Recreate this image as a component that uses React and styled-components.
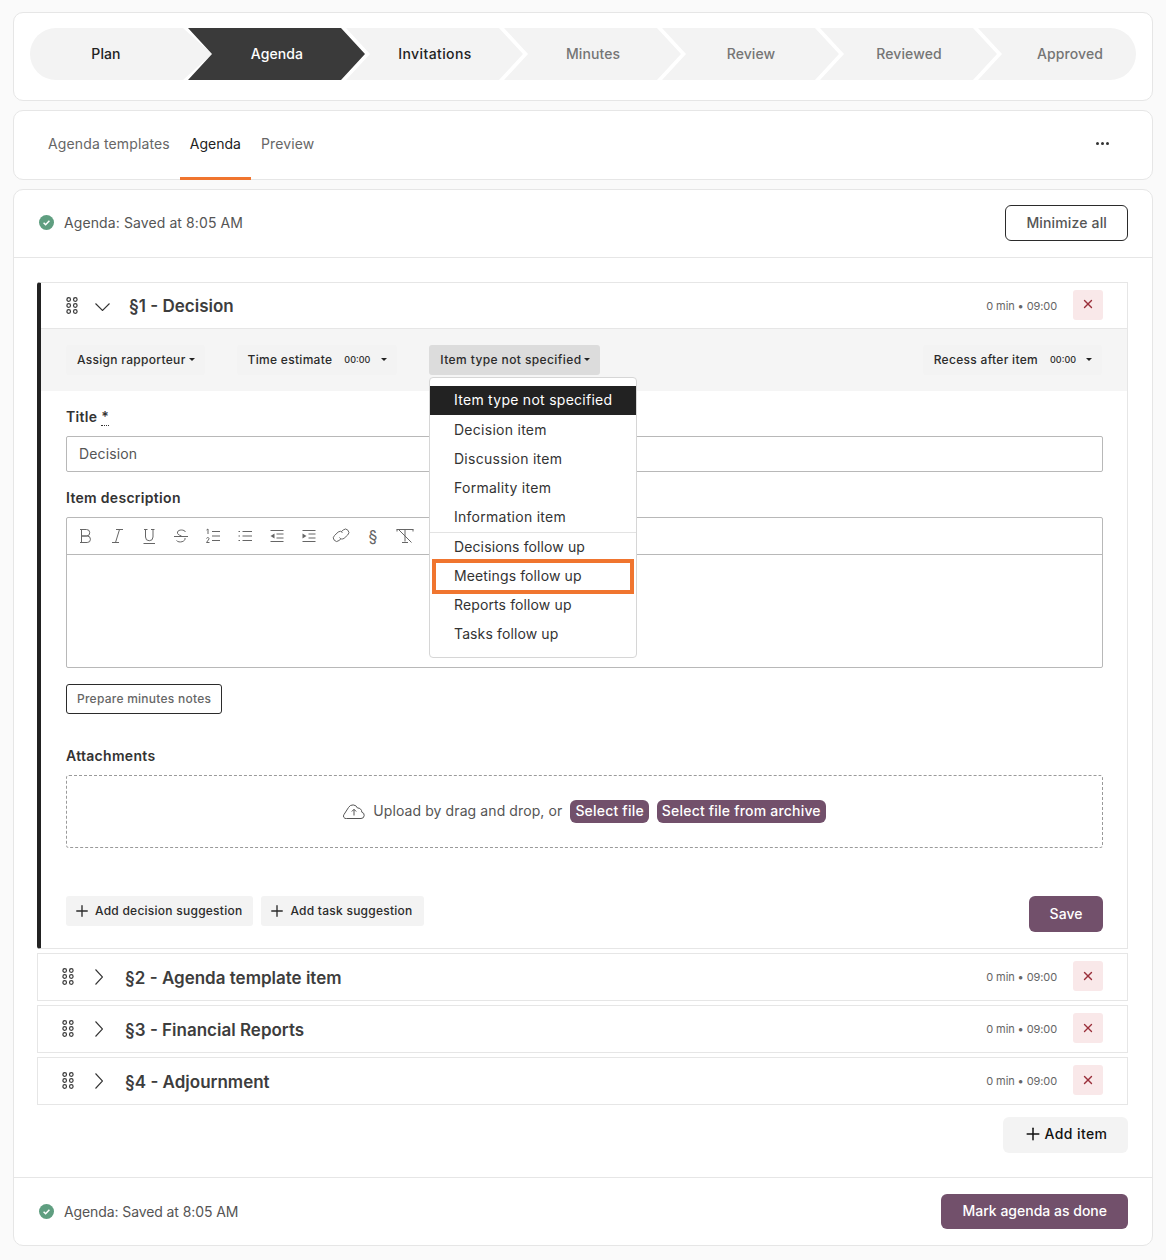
import styled, { createGlobalStyle } from 'styled-components';
import { Plus, X } from 'lucide-react';

const GlobalStyle = createGlobalStyle`
  html, body {
    margin: 0;
    padding: 0;
    background: #fafafa;
    font-family: 'Inter', 'Liberation Sans', sans-serif;
    color: #333;
  }
  * {
    box-sizing: border-box;
  }
`;

const Page = styled.div`
  display: flex;
  flex-direction: column;
  gap: 9px;
  padding: 12px 13px 0 13px;
  width: 1166px;
  height: 1260px;
`;

const Card = styled.section`
  background: #fff;
  border: 1px solid #e6e6e6;
  border-radius: 10px;
`;

const StepCard = styled(Card)`
  height: 89px;
  padding: 15px 16px;
`;

const Stepper = styled.div`
  display: flex;
  height: 52px;
`;

const Step = styled.div`
  flex: none;
  width: ${p => (p.$last ? '158px' : '182px')};
  margin-right: ${p => (p.$last ? '0' : '-24px')};
  padding: ${p => (p.$first ? '0 30px 2px 0' : p.$last ? '0 0 2px 26px' : '0 4px 2px 0')};
  display: flex;
  align-items: center;
  justify-content: center;
  font-size: 14px;
  font-weight: 500;
  letter-spacing: ${p => (p.$done && !p.$first && !p.$active ? '.4px' : '.1px')};
  background: ${p => (p.$active ? '#3a3a3a' : '#f3f3f3')};
  color: ${p => (p.$active ? '#fff' : p.$done ? '#222' : '#757575')};
  border-radius: ${p => (p.$first ? '26px 0 0 26px' : p.$last ? '0 26px 26px 0' : '0')};
  clip-path: ${p =>
    p.$first
      ? 'polygon(0 0, 153px 0, 182px 50%, 153px 100%, 0 100%)'
      : p.$last
        ? 'polygon(0 0, 100% 0, 100% 100%, 0 100%, 24px 50%)'
        : 'polygon(0 0, 153px 0, 177px 50%, 153px 100%, 0 100%, 24px 50%)'};
`;

const TabCard = styled(Card)`
  height: 70px;
  display: flex;
  align-items: stretch;
  justify-content: space-between;
  padding: 0 43px 0 24px;
`;

const Tabs = styled.nav`
  display: flex;
`;

const Tab = styled.div`
  display: flex;
  align-items: center;
  padding: 0 10px 2px;
  margin-bottom: -1px;
  font-size: 14px;
  letter-spacing: ${p => (p.$active ? '0' : '.13px')};
  color: ${p => (p.$active ? '#222' : '#666')};
  border-bottom: 3px solid ${p => (p.$active ? '#f0752f' : 'transparent')};
`;

const MoreDots = styled.div`
  display: flex;
  align-items: center;
  gap: 2px;
  margin-bottom: 3px;
  span {
    width: 3px;
    height: 3px;
    border-radius: 50%;
    background: #333;
  }
`;

const MainCard = styled(Card)`
  height: 1057px;
  display: flex;
  flex-direction: column;
`;

const StatusBar = styled.header`
  height: 68px;
  display: flex;
  align-items: center;
  justify-content: space-between;
  padding: 0 24px 1px 25px;
  border-bottom: 1px solid #e6e6e6;
`;

const FooterBar = styled(StatusBar)`
  border-bottom: none;
  border-top: 1px solid #e6e6e6;
  padding-bottom: 0;
`;

const Status = styled.div`
  display: flex;
  align-items: center;
  gap: 10px;
  padding-bottom: ${p => (p.$tight ? '0' : '2px')};
  font-size: 14px;
  letter-spacing: ${p => (p.$tight ? '-.1px' : '.1px')};
  color: #555;
`;

const OutlineButton = styled.button`
  font-family: inherit;
  font-size: 14px;
  font-weight: 500;
  letter-spacing: .15px;
  color: #555;
  background: #fff;
  border: 1px solid #2b2b2b;
  border-radius: 6px;
  height: 36px;
  padding: 0 20px 2px;
`;

const PrimaryButton = styled.button`
  font-family: inherit;
  font-size: 14px;
  font-weight: 500;
  color: #fff;
  background: #72506b;
  border: none;
  border-radius: 6px;
  height: 36px;
  padding: 0 21px 2px;
`;

const MarkDoneButton = styled(PrimaryButton)`
  height: 35px;
`;

const Body = styled.div`
  flex: 1;
  display: flex;
  flex-direction: column;
  padding: 24px 24px 0 23px;
`;

const Item = styled.article`
  border: 1px solid #e6e6e6;
  margin-bottom: 4px;
`;

const OpenItem = styled(Item)`
  height: 667px;
  border-left: 4px solid #222;
  border-radius: 3px 0 0 3px;
  position: relative;
`;

const ItemHead = styled.div`
  height: 46px;
  display: flex;
  align-items: center;
  padding: 0 24px 0 ${p => (p.$open ? '25px' : '24px')};
  border-bottom: ${p => (p.$open ? '1px solid #e6e6e6' : 'none')};
`;

const Grip = styled.svg`
  flex: none;
  width: 12px;
  height: 17px;
  margin-top: -1px;
  margin-right: 13px;
  color: #3a3a3a;
`;

const Caret = styled.span`
  flex: none;
  display: flex;
  justify-content: center;
  width: 22px;
  margin-right: 16px;
  padding-left: ${p => (p.$open ? '0' : '2px')};
  margin-top: ${p => (p.$open ? '2px' : '-1px')};
  color: #333;
`;

const ItemTitle = styled.h3`
  margin: 0;
  flex: 1;
  padding-top: 1px;
  font-size: 17px;
  font-weight: 600;
  color: #3d3d3d;
`;

const Meta = styled.span`
  font-size: 11px;
  letter-spacing: -.1px;
  color: #666;
  margin-right: 16px;
`;

const DeleteButton = styled.button`
  width: 30px;
  height: 30px;
  margin-top: -2px;
  padding: 0 0 1px;
  display: flex;
  align-items: center;
  justify-content: center;
  border: none;
  border-radius: 3px;
  background: #f9e8e9;
  color: #9a2f3a;
`;

const Toolbar = styled.div`
  height: 62px;
  background: #f5f5f5;
  display: flex;
  align-items: center;
  gap: 32px;
  padding: 0 25px;
`;

const ToolButton = styled.div`
  height: 30px;
  display: flex;
  align-items: center;
  padding: 0 10px 1px 11px;
  border-radius: 3px;
  font-size: 12px;
  font-weight: 500;
  letter-spacing: ${p => (p.$open ? '.4px' : '.3px')};
  color: #2b2b2b;
  background: ${p => (p.$open ? '#dcdcdc' : '#f3f3f3')};
  margin-left: ${p => (p.$right ? 'auto' : '0')};
`;

const Time = styled.span`
  font-size: 9px;
  letter-spacing: 0;
  margin-left: 12px;
`;

const CaretDown = styled.i`
  width: 0;
  height: 0;
  margin-left: ${p => p.$gap || 3}px;
  border-left: 3px solid transparent;
  border-right: 3px solid transparent;
  border-top: 3px solid #222;
`;

const Form = styled.div`
  padding: 0 24px 0 25px;
`;

const Label = styled.div`
  font-size: 14px;
  font-weight: 600;
  letter-spacing: .3px;
  color: #333;
  line-height: 18px;
`;

const Required = styled.span`
  border-bottom: 1px dotted #333;
`;

const TitleLabel = styled(Label)`
  padding-top: 17px;
`;

const TitleInput = styled.div`
  height: 36px;
  margin-top: 10px;
  padding: 0 12px 1px;
  display: flex;
  align-items: center;
  border: 1px solid #b8b8b8;
  border-radius: 2px;
  font-size: 14px;
  letter-spacing: .13px;
  color: #555;
`;

const DescLabel = styled(Label)`
  margin-top: 17px;
`;

const Editor = styled.div`
  margin-top: 10px;
  height: 151px;
  border: 1px solid #b8b8b8;
  border-radius: 2px;
`;

const EditorBar = styled.div`
  height: 37px;
  display: flex;
  align-items: center;
  gap: 12px;
  padding: 0 8px;
  border-bottom: 1px solid #b8b8b8;
  color: #666;
  svg {
    width: 20px;
    height: 20px;
    flex: none;
  }
`;

const SectionMark = styled.span`
  flex: none;
  width: 20px;
  text-align: center;
  font-size: 16px;
  line-height: 20px;
`;

const NotesButton = styled(OutlineButton)`
  display: block;
  height: 30px;
  margin-top: 16px;
  padding: 0 10px 1px;
  border-radius: 3px;
  font-size: 12px;
  letter-spacing: .25px;
  color: #666;
`;

const AttachLabel = styled(Label)`
  margin-top: 33px;
`;

const DropZone = styled.div`
  margin-top: 10px;
  height: 73px;
  display: flex;
  align-items: center;
  justify-content: center;
  padding-bottom: 1px;
  border: 1px dashed #9a9a9a;
  border-radius: 3px;
  font-size: 14px;
  letter-spacing: .1px;
  color: #555;
`;

const UploadText = styled.span`
  padding-bottom: 2px;
`;

const CloudIcon = styled.svg`
  width: 22px;
  height: 16px;
  margin: 0 8px 1px 0;
  color: #555;
`;

const Pill = styled.span`
  height: 23px;
  display: inline-flex;
  align-items: center;
  padding: 0 5px 1px;
  margin-left: 8px;
  border-radius: 6px;
  background: #72506b;
  color: #fff;
  font-weight: 500;
  letter-spacing: .2px;
`;

const ActionRow = styled.div`
  display: flex;
  align-items: flex-start;
  gap: 8px;
  margin-top: 48px;
`;

const GhostButton = styled.div`
  height: 30px;
  display: flex;
  align-items: center;
  gap: 4px;
  padding: 0 11px 1px 7px;
  border-radius: 3px;
  background: #f3f3f3;
  font-size: 12px;
  font-weight: 500;
  letter-spacing: .25px;
  color: #2b2b2b;
`;

const SaveButton = styled(PrimaryButton)`
  margin-left: auto;
  width: 74px;
  padding: 0 0 1px;
`;

const AddRow = styled.div`
  display: flex;
  justify-content: flex-end;
  margin-top: 8px;
`;

const AddItemButton = styled.div`
  height: 36px;
  width: 125px;
  display: flex;
  align-items: center;
  justify-content: center;
  gap: 2px;
  padding: 0 1px 3px 0;
  border-radius: 6px;
  background: #f3f3f3;
  font-size: 14px;
  font-weight: 500;
  letter-spacing: .4px;
  color: #111;
`;

const Menu = styled.div`
  position: absolute;
  left: 388px;
  top: 94px;
  width: 208px;
  height: 281px;
  padding-top: 8px;
  background: #fff;
  border: 1px solid #d6d6d6;
  border-radius: 4px;
  z-index: 2;
`;

const MenuItem = styled.div`
  height: 29px;
  padding: 0 0 ${p => (p.$lift ? '2px' : '1px')} 24px;
  display: flex;
  align-items: center;
  font-size: 14px;
  letter-spacing: ${p => (p.$lift && !p.$active ? '.12px' : '.27px')};
  color: ${p => (p.$active ? '#fff' : '#333')};
  background: ${p => (p.$active ? '#222' : 'transparent')};
`;

const MenuDivider = styled.div`
  margin: 1px 0 0;
  border-top: 1px solid #e3e3e3;
`;

const MenuHighlight = styled.div`
  position: absolute;
  left: 2px;
  top: 181px;
  width: 202px;
  height: 35px;
  border: 4px solid #f0752f;
`;

const steps = ['Plan', 'Agenda', 'Invitations', 'Minutes', 'Review', 'Reviewed', 'Approved'];

const closedItems = ['§2 - Agenda template item', '§3 - Financial Reports', '§4 - Adjournment'];

const menuTop = ['Decision item', 'Discussion item', 'Formality item', 'Information item'];
const menuBottom = ['Decisions follow up', 'Meetings follow up', 'Reports follow up', 'Tasks follow up'];

const GripIcon = () => (
  <Grip viewBox="0 0 12 17" fill="none" stroke="currentColor" strokeWidth="1.2">
    {[2.5, 8.5, 14.5].map(y => (
      <g key={y}>
        <circle cx="2.7" cy={y} r="1.8" />
        <circle cx="9.3" cy={y} r="1.8" />
      </g>
    ))}
  </Grip>
);

const SavedIcon = () => (
  <svg width="15" height="15" viewBox="0 0 15 15">
    <circle cx="7.5" cy="7.5" r="7.5" fill="#5f9e80" />
    <path d="M4.6 7.7l2 2 3.8-4" fill="none" stroke="#fff" strokeWidth="1.5" />
  </svg>
);

const ChevronOpen = () => (
  <svg width="15" height="8" viewBox="0 0 15 8" fill="none" stroke="currentColor" strokeWidth="1.1">
    <path d="M.5.5l7 7 7-7" />
  </svg>
);

const ChevronClosed = () => (
  <svg width="8" height="16" viewBox="0 0 8 16" fill="none" stroke="currentColor" strokeWidth="1.1">
    <path d="M.5.5l7 7.500-7 7.500" />
  </svg>
);

const DeleteItem = () => (
  <DeleteButton><X size={14} strokeWidth={2.3} /></DeleteButton>
);

// thin editor glyphs, drawn to follow the toolbar in the reference
const editorIcons = [
  <path key="b" d="M5 3.500h6.500a3.200 3.200 0 0 1 0 6.500H6.500m0 0h5.700a3.200 3.200 0 0 1 0 6.500H5M6.500 3.500v13" />,
  <path key="i" d="M9 3.500h7M5 16.500h7M12.500 3.500L8.500 16.500" />,
  <path key="u" d="M5 3.500h3.500M12 3.500h3.500M6.500 4v7a3.700 3.700 0 0 0 7.500 0V4M4.500 17.500h11.500" />,
  <path key="s" d="M14.500 6C13.500 3.500 7.500 3.200 6.500 6c-.5 1.800 1 3 4 4M3 10.500h14M14 12c1 3.500-6 5.500-8.500 2.500" />,
  <g key="ol">
    <path d="M9 5.500h8M9 10h8M9 14.500h8" strokeWidth="1.2" />
    <path d="M3.500 4l1.500-1v5M3.500 12.500c.5-1.500 3-1 2.500.5L3.500 16.500h3" strokeWidth="1" />
  </g>,
  <path key="ul" d="M7.500 5.500h9.500M7.500 10h9.500M7.500 14.500h9.500M3.500 5.500h1.500M3.500 10h1.500M3.500 14.500h1.500" strokeWidth="1.2" />,
  <g key="out">
    <path d="M3.500 4.500h13M9.500 8h7M9.500 12h7M3.500 15.500h13" strokeWidth="1.2" />
    <path d="M7.500 7.500v5L3.500 10z" fill="currentColor" stroke="none" />
  </g>,
  <g key="in">
    <path d="M3.500 4.500h13M9.500 8h7M9.500 12h7M3.500 15.500h13" strokeWidth="1.2" />
    <path d="M3.500 7.500v5L7.500 10z" fill="currentColor" stroke="none" />
  </g>,
  <path key="l" d="M11.500 6.500a3.200 3.200 0 0 0-4.300-.5L3.500 9.500a3.300 3.300 0 0 0 4.500 5l2-1.800M8.500 11.500c1 1.700 3 2 4.600.8L16.700 9a3.300 3.300 0 0 0-4.500-5l-2 1.800" />,
  null,
  <path key="x" d="M1.500 3.500h17M2 3.500v2M18 3.500v2M10 3.500v12M7 16.500h6M3.500 3.500l13 13" />,
];

const App = () => (
  <>
    <GlobalStyle />
    <Page>
      <StepCard>
        <Stepper>
          {steps.map((s, i) => (
            <Step key={s} $first={i === 0} $last={i === steps.length - 1} $active={i === 1} $done={i < 3}>
              {s}
            </Step>
          ))}
        </Stepper>
      </StepCard>

      <TabCard>
        <Tabs>
          <Tab>Agenda templates</Tab>
          <Tab $active>Agenda</Tab>
          <Tab>Preview</Tab>
        </Tabs>
        <MoreDots>
          <span />
          <span />
          <span />
        </MoreDots>
      </TabCard>

      <MainCard>
        <StatusBar>
          <Status>
            <SavedIcon />
            Agenda: Saved at 8:05 AM
          </Status>
          <OutlineButton>Minimize all</OutlineButton>
        </StatusBar>

        <Body>
          <OpenItem>
            <ItemHead $open>
              <GripIcon />
              <Caret $open><ChevronOpen /></Caret>
              <ItemTitle>§1 - Decision</ItemTitle>
              <Meta>0 min • 09:00</Meta>
              <DeleteItem />
            </ItemHead>
            <Toolbar>
              <ToolButton>Assign rapporteur<CaretDown /></ToolButton>
              <ToolButton>Time estimate<Time>00:00</Time><CaretDown $gap={11} /></ToolButton>
              <ToolButton $open>Item type not specified<CaretDown /></ToolButton>
              <ToolButton $right>Recess after item<Time>00:00</Time><CaretDown $gap={10} /></ToolButton>
            </Toolbar>
            <Form>
              <TitleLabel>Title <Required>*</Required></TitleLabel>
              <TitleInput>Decision</TitleInput>
              <DescLabel>Item description</DescLabel>
              <Editor>
                <EditorBar>
                  {editorIcons.map((icon, i) =>
                    icon ? (
                      <svg key={i} viewBox="0 0 20 20" fill="none" stroke="currentColor" strokeWidth="1">
                        {icon}
                      </svg>
                    ) : (
                      <SectionMark key={i}>§</SectionMark>
                    )
                  )}
                </EditorBar>
              </Editor>
              <NotesButton>Prepare minutes notes</NotesButton>
              <AttachLabel>Attachments</AttachLabel>
              <DropZone>
                <CloudIcon viewBox="0 0 22 16" fill="none" stroke="currentColor" strokeWidth="1">
                  <path d="M3.500 15.500H18a3.200 3.200 0 0 0 .8-6.300A4 4 0 0 0 14.500 5a5 5 0 0 0-9-.5L1 11.500a2.500 2.500 0 0 0 2.500 4z" />
                  <path d="M11 12.500V6.500M8.800 8.500L11 6.300l2.200 2.200" />
                </CloudIcon>
                <UploadText>Upload by drag and drop, or</UploadText>
                <Pill>Select file</Pill>
                <Pill>Select file from archive</Pill>
              </DropZone>
              <ActionRow>
                <GhostButton><Plus size={18} strokeWidth={1.8} />Add decision suggestion</GhostButton>
                <GhostButton><Plus size={18} strokeWidth={1.8} />Add task suggestion</GhostButton>
                <SaveButton>Save</SaveButton>
              </ActionRow>
            </Form>
            <Menu>
              <MenuItem $active $lift>Item type not specified</MenuItem>
              {menuTop.map(m => <MenuItem key={m}>{m}</MenuItem>)}
              <MenuDivider />
              {menuBottom.map(m => <MenuItem key={m} $lift>{m}</MenuItem>)}
              <MenuHighlight />
            </Menu>
          </OpenItem>

          {closedItems.map(t => (
            <Item key={t}>
              <ItemHead>
                <GripIcon />
                <Caret><ChevronClosed /></Caret>
                <ItemTitle>{t}</ItemTitle>
                <Meta>0 min • 09:00</Meta>
                <DeleteItem />
              </ItemHead>
            </Item>
          ))}

          <AddRow>
            <AddItemButton><Plus size={20} strokeWidth={1.8} />Add item</AddItemButton>
          </AddRow>
        </Body>

        <FooterBar>
          <Status $tight>
            <SavedIcon />
            Agenda: Saved at 8:05 AM
          </Status>
          <MarkDoneButton>Mark agenda as done</MarkDoneButton>
        </FooterBar>
      </MainCard>
    </Page>
  </>
);

export default App;
